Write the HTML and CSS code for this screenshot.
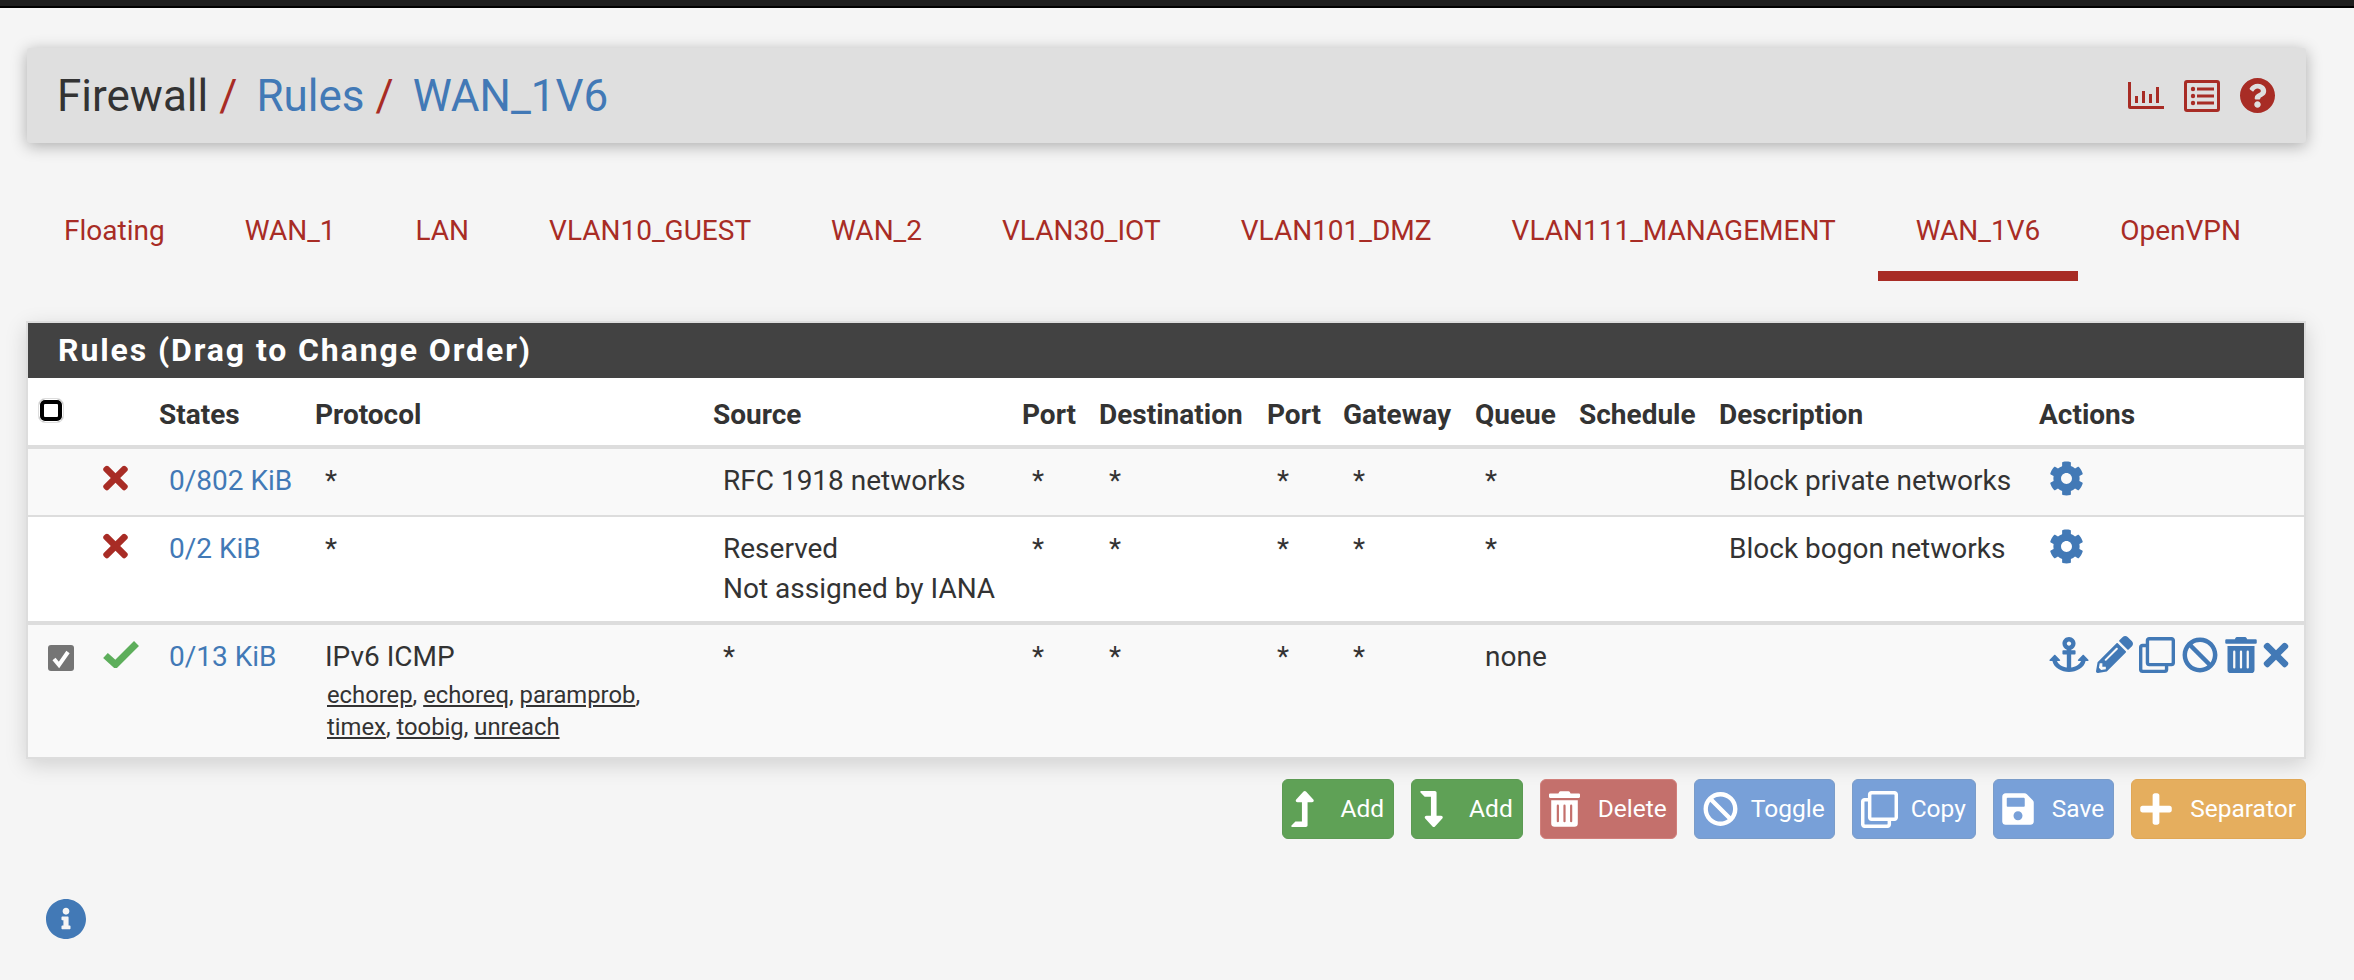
FILE: index.html
```html
<!DOCTYPE html>
<html lang="en">
<head>
<meta charset="utf-8">
<title>Firewall / Rules / WAN_1V6</title>
<link rel="stylesheet" href="styles.css">
</head>
<body>
<svg class="sprite" aria-hidden="true">
  <symbol id="i-times" viewBox="0 0 352 512"><path d="M242.72 256l100.07-100.07c12.28-12.28 12.28-32.19 0-44.48l-22.24-22.24c-12.28-12.28-32.19-12.28-44.48 0L176 189.28 75.93 89.21c-12.28-12.28-32.19-12.28-44.48 0L9.21 111.45c-12.28 12.28-12.28 32.19 0 44.48L109.28 256 9.21 356.07c-12.28 12.28-12.28 32.19 0 44.48l22.24 22.24c12.28 12.28 32.2 12.28 44.48 0L176 322.72l100.07 100.07c12.28 12.28 32.2 12.28 44.48 0l22.24-22.24c12.28-12.28 12.28-32.19 0-44.48L242.72 256z"/></symbol>
  <symbol id="i-cog" viewBox="0 0 512 512"><path d="M487.4 315.7l-42.6-24.6c4.3-23.2 4.3-47 0-70.2l42.6-24.6c4.9-2.8 7.1-8.6 5.5-14-11.1-35.6-30-67.8-54.7-94.6-3.8-4.1-10-5.1-14.8-2.3L380.8 110c-17.9-15.4-38.5-27.3-60.8-35.1V25.8c0-5.6-3.9-10.5-9.4-11.7-36.7-8.2-74.3-7.8-109.2 0-5.5 1.2-9.4 6.1-9.4 11.7V75c-22.2 7.9-42.8 19.8-60.8 35.1L88.7 85.5c-4.9-2.8-11-1.9-14.8 2.3-24.7 26.7-43.6 58.9-54.7 94.6-1.7 5.4.6 11.2 5.5 14L67.3 221c-4.3 23.2-4.3 47 0 70.2l-42.6 24.6c-4.9 2.8-7.1 8.6-5.5 14 11.1 35.6 30 67.8 54.7 94.6 3.8 4.1 10 5.1 14.8 2.3l42.6-24.6c17.9 15.4 38.5 27.3 60.8 35.1v49.2c0 5.6 3.9 10.5 9.4 11.7 36.7 8.2 74.3 7.8 109.2 0 5.5-1.2 9.4-6.1 9.4-11.7v-49.2c22.2-7.9 42.8-19.8 60.8-35.1l42.6 24.6c4.9 2.8 11 1.9 14.8-2.3 24.7-26.7 43.6-58.9 54.7-94.6 1.5-5.5-.7-11.3-5.6-14.1zM256 336c-44.1 0-80-35.9-80-80s35.9-80 80-80 80 35.9 80 80-35.9 80-80 80z"/></symbol>
  <symbol id="i-anchor" viewBox="0 0 576 512"><path d="M12.971 352h32.394C67.172 454.735 181.944 512 288 512c106.229 0 220.853-57.38 242.635-160h32.394c10.691 0 16.045-12.926 8.485-20.485l-67.029-67.029c-4.686-4.686-12.284-4.686-16.971 0l-67.029 67.029c-7.56 7.56-2.206 20.485 8.485 20.485h35.146c-20.29 54.317-84.963 86.588-144.117 94.015V256h52c6.627 0 12-5.373 12-12v-40c0-6.627-5.373-12-12-12h-52v-5.47c37.281-13.178 63.995-48.725 64-90.518C384.005 43.772 341.605.738 289.37.01 235.723-.739 192 42.525 192 96c0 41.798 26.716 77.35 64 90.53V192h-52c-6.627 0-12 5.373-12 12v40c0 6.627 5.373 12 12 12h52v190.015c-58.936-7.399-123.82-39.679-144.117-94.015h35.146c10.691 0 16.045-12.926 8.485-20.485l-67.029-67.029c-4.686-4.686-12.284-4.686-16.971 0L4.485 331.515C-3.074 339.074 2.28 352 12.971 352zM288 64c17.645 0 32 14.355 32 32s-14.355 32-32 32-32-14.355-32-32 14.355-32 32-32z"/></symbol>
  <symbol id="i-pencil" viewBox="0 0 512 512"><path d="M497.9 142.1l-46.1 46.1c-4.7 4.7-12.3 4.7-17 0l-111-111c-4.7-4.7-4.7-12.3 0-17l46.1-46.1c18.7-18.7 49.1-18.7 67.9 0l60.1 60.1c18.8 18.7 18.8 49.1 0 67.9zM284.2 99.8L21.6 362.4.4 483.9c-2.9 16.4 11.4 30.6 27.8 27.8l121.5-21.3 262.6-262.6c4.7-4.7 4.7-12.3 0-17l-111-111c-4.8-4.7-12.4-4.7-17.1 0zM124.1 339.9c-5.5-5.5-5.5-14.3 0-19.8l154-154c5.5-5.5 14.3-5.5 19.8 0s5.5 14.3 0 19.8l-154 154c-5.5 5.5-14.3 5.5-19.8 0zM88 424h48v36.3l-64.5 11.3-31.1-31.1L51.7 376H88v48z"/></symbol>
  <symbol id="i-clone" viewBox="0 0 512 512"><path d="M464 0H144c-26.51 0-48 21.49-48 48v48H48c-26.51 0-48 21.49-48 48v320c0 26.51 21.49 48 48 48h320c26.51 0 48-21.49 48-48v-48h48c26.51 0 48-21.49 48-48V48c0-26.51-21.49-48-48-48zM362 464H54a6 6 0 0 1-6-6V150a6 6 0 0 1 6-6h42v224c0 26.51 21.49 48 48 48h224v42a6 6 0 0 1-6 6zm96-96H150a6 6 0 0 1-6-6V54a6 6 0 0 1 6-6h308a6 6 0 0 1 6 6v308a6 6 0 0 1-6 6z"/></symbol>
  <symbol id="i-ban" viewBox="0 0 512 512"><path d="M256 8C119.034 8 8 119.033 8 256s111.034 248 248 248 248-111.034 248-248S392.967 8 256 8zm130.108 117.892c65.448 65.448 70 165.481 20.677 235.637L150.47 105.216c70.204-49.356 170.226-44.735 235.638 20.676zM125.892 386.108c-65.448-65.448-70-165.481-20.677-235.637L361.53 406.784c-70.203 49.356-170.226 44.736-235.638-20.676z"/></symbol>
  <symbol id="i-trash" viewBox="0 0 448 512"><path d="M32 464a48 48 0 0 0 48 48h288a48 48 0 0 0 48-48V128H32zm272-256a16 16 0 0 1 32 0v224a16 16 0 0 1-32 0zm-96 0a16 16 0 0 1 32 0v224a16 16 0 0 1-32 0zm-96 0a16 16 0 0 1 32 0v224a16 16 0 0 1-32 0zM432 32H312l-9.4-18.7A24 24 0 0 0 281.1 0H166.8a23.72 23.72 0 0 0-21.4 13.3L136 32H16A16 16 0 0 0 0 48v32a16 16 0 0 0 16 16h416a16 16 0 0 0 16-16V48a16 16 0 0 0-16-16z"/></symbol>
  <symbol id="i-up" viewBox="0 0 320 512"><path d="M313.553 119.669L209.587 7.666c-9.485-10.214-25.676-10.229-35.174 0L70.438 119.669C56.232 134.969 67.062 160 88.025 160H152v272H68.024a11.996 11.996 0 0 0-8.485 3.515l-56 56C-4.021 499.074 1.333 512 12.024 512h196c13.255 0 24-10.745 24-24V160h63.966c20.878 0 31.851-24.969 17.563-40.331z"/></symbol>
  <symbol id="i-down" viewBox="0 0 320 512"><path d="M313.553 392.331L209.587 504.334c-9.485 10.214-25.676 10.229-35.174 0L70.438 392.331C56.232 377.031 67.062 352 88.025 352H152V80H68.024a11.996 11.996 0 0 1-8.485-3.515l-56-56C-4.021 12.926 1.333 0 12.024 0h196c13.255 0 24 10.745 24 24v328h63.966c20.878 0 31.851 24.969 17.563 40.331z"/></symbol>
  <symbol id="i-save" viewBox="0 0 448 512"><path d="M433.941 129.941l-83.882-83.882A48 48 0 0 0 316.118 32H48C21.49 32 0 53.49 0 80v352c0 26.51 21.49 48 48 48h352c26.51 0 48-21.49 48-48V163.882a48 48 0 0 0-14.059-33.941zM224 416c-35.346 0-64-28.654-64-64 0-35.346 28.654-64 64-64s64 28.654 64 64c0 35.346-28.654 64-64 64zm96-304.52V212c0 6.627-5.373 12-12 12H76c-6.627 0-12-5.373-12-12V108c0-6.627 5.373-12 12-12h228.52c3.183 0 6.235 1.264 8.485 3.515l3.48 3.48A11.996 11.996 0 0 1 320 111.48z"/></symbol>
  <symbol id="i-plus" viewBox="0 0 448 512"><path d="M416 208H272V64c0-17.67-14.33-32-32-32h-32c-17.67 0-32 14.33-32 32v144H32c-17.67 0-32 14.33-32 32v32c0 17.67 14.33 32 32 32h144v144c0 17.67 14.33 32 32 32h32c17.67 0 32-14.33 32-32V304h144c17.67 0 32-14.33 32-32v-32c0-17.67-14.33-32-32-32z"/></symbol>
</svg>

<div class="topbar"></div>
<main class="page">
  <header class="pagehead">
    <h1 class="crumbs">
      <span class="crumb-root">Firewall</span><span class="slash">/</span>
      <a class="crumb" href="#">Rules</a><span class="slash">/</span>
      <a class="crumb" href="#">WAN_1V6</a>
    </h1>
    <div class="head-icons">
      <svg class="hi hi-chart" viewBox="0 0 36 27"><path d="M0 0h3v24h33v3H2a2 2 0 0 1-2-2zM7 14h3v7H7zM14 9h3v12h-3zM21 12h3v9h-3zM28 5h3v16h-3z"/></svg>
      <svg class="hi hi-list" viewBox="0 0 36 32"><path fill-rule="evenodd" d="M3 0h30a3 3 0 0 1 3 3v26a3 3 0 0 1-3 3H3a3 3 0 0 1-3-3V3a3 3 0 0 1 3-3zm.5 3a.5.5 0 0 0-.5.5v25a.5.5 0 0 0 .5.5h29a.5.5 0 0 0 .5-.5v-25a.5.5 0 0 0-.5-.5z"/><circle cx="9" cy="9" r="2.2"/><circle cx="9" cy="16" r="2.2"/><circle cx="9" cy="23" r="2.2"/><path d="M13 7.5h17v3H13zM13 14.5h17v3H13zM13 21.5h17v3H13z"/></svg>
      <svg class="hi hi-help" viewBox="8 8 496 496"><path d="M504 256c0 136.997-111.043 248-248 248S8 392.997 8 256C8 119.083 119.043 8 256 8s248 111.083 248 248zM262.655 90c-54.497 0-89.255 22.957-116.549 63.758-3.536 5.286-2.353 12.415 2.715 16.258l34.699 26.31c5.205 3.947 12.621 3.008 16.665-2.122 17.864-22.658 30.113-35.797 57.303-35.797 20.429 0 45.698 13.148 45.698 32.958 0 14.976-12.363 22.667-32.534 33.976C247.128 238.528 216 254.941 216 296v4c0 6.627 5.373 12 12 12h56c6.627 0 12-5.373 12-12v-1.333c0-28.462 83.186-29.647 83.186-106.667 0-58.002-60.165-102-116.531-102zM256 338c-25.365 0-46 20.635-46 46 0 25.364 20.635 46 46 46s46-20.636 46-46c0-25.365-20.635-46-46-46z"/></svg>
    </div>
  </header>

  <nav class="tabs">
    <a class="tab" href="#">Floating</a>
    <a class="tab" href="#">WAN_1</a>
    <a class="tab" href="#">LAN</a>
    <a class="tab" href="#">VLAN10_GUEST</a>
    <a class="tab" href="#">WAN_2</a>
    <a class="tab" href="#">VLAN30_IOT</a>
    <a class="tab" href="#">VLAN101_DMZ</a>
    <a class="tab" href="#">VLAN111_MANAGEMENT</a>
    <a class="tab tab-active" href="#">WAN_1V6</a>
    <a class="tab" href="#">OpenVPN</a>
  </nav>

  <section class="panel">
    <h2 class="panel-title">Rules (Drag to Change Order)</h2>
    <table class="rules">
      <thead>
        <tr>
          <th class="c-check"><span class="head-box"></span></th>
          <th class="c-act"></th>
          <th class="c-states">States</th>
          <th class="c-proto">Protocol</th>
          <th class="c-source">Source</th>
          <th class="c-port">Port</th>
          <th class="c-dest">Destination</th>
          <th class="c-port2">Port</th>
          <th class="c-gw">Gateway</th>
          <th class="c-queue">Queue</th>
          <th class="c-sched">Schedule</th>
          <th class="c-desc">Description</th>
          <th class="c-actions">Actions</th>
        </tr>
      </thead>
      <tbody>
        <tr class="row-a">
          <td></td>
          <td><svg class="ic ic-x"><use href="#i-times"/></svg></td>
          <td><a class="link" href="#">0/802 KiB</a></td>
          <td>*</td>
          <td>RFC 1918 networks</td>
          <td>*</td><td>*</td><td>*</td><td>*</td><td>*</td><td></td>
          <td>Block private networks</td>
          <td><svg class="ic ic-cog"><use href="#i-cog"/></svg></td>
        </tr>
        <tr class="row-b">
          <td></td>
          <td><svg class="ic ic-x"><use href="#i-times"/></svg></td>
          <td><a class="link" href="#">0/2 KiB</a></td>
          <td>*</td>
          <td>Reserved<br>Not assigned by IANA</td>
          <td>*</td><td>*</td><td>*</td><td>*</td><td>*</td><td></td>
          <td>Block bogon networks</td>
          <td><svg class="ic ic-cog"><use href="#i-cog"/></svg></td>
        </tr>
        <tr class="row-c">
          <td><span class="row-box"><svg viewBox="0 0 26 26"><path d="M6 14l5 6 9-13"/></svg></span></td>
          <td><svg class="ic-check" viewBox="0 0 36 27"><path d="M2.500 14.500l10 9L33.500 2.500"/></svg></td>
          <td><a class="link" href="#">0/13 KiB</a></td>
          <td>IPv6 ICMP
            <div class="subs"><a href="#">echorep</a>, <a href="#">echoreq</a>, <a href="#">paramprob</a>,<br><a href="#">timex</a>, <a href="#">toobig</a>, <a href="#">unreach</a></div>
          </td>
          <td>*</td>
          <td>*</td><td>*</td><td>*</td><td>*</td><td>none</td><td></td>
          <td></td>
          <td>
            <div class="actions">
              <svg class="ic a-anchor"><use href="#i-anchor"/></svg>
              <svg class="ic a-pencil"><use href="#i-pencil"/></svg>
              <svg class="ic a-clone"><use href="#i-clone"/></svg>
              <svg class="ic a-ban"><use href="#i-ban"/></svg>
              <svg class="ic a-trash"><use href="#i-trash"/></svg>
              <svg class="ic a-times"><use href="#i-times"/></svg>
            </div>
          </td>
        </tr>
      </tbody>
    </table>
  </section>

  <div class="buttons">
    <a class="btn btn-green gap-l" href="#"><svg class="bi bi-arrow"><use href="#i-up"/></svg>Add</a>
    <a class="btn btn-green gap-l" href="#"><svg class="bi bi-arrow"><use href="#i-down"/></svg>Add</a>
    <a class="btn btn-red gap-m" href="#"><svg class="bi bi-trash"><use href="#i-trash"/></svg>Delete</a>
    <a class="btn btn-blue gap-s" href="#"><svg class="bi bi-ban"><use href="#i-ban"/></svg>Toggle</a>
    <a class="btn btn-blue gap-s" href="#"><svg class="bi bi-clone"><use href="#i-clone"/></svg>Copy</a>
    <a class="btn btn-blue gap-m" href="#"><svg class="bi bi-save"><use href="#i-save"/></svg>Save</a>
    <a class="btn btn-orange gap-m" href="#"><svg class="bi bi-plus"><use href="#i-plus"/></svg>Separator</a>
  </div>

  <svg class="info" viewBox="8 8 496 496"><path d="M256 8C119.043 8 8 119.083 8 256c0 136.997 111.043 248 248 248s248-111.003 248-248C504 119.083 392.957 8 256 8zm0 110c23.196 0 42 18.804 42 42s-18.804 42-42 42-42-18.804-42-42 18.804-42 42-42zm56 254c0 6.627-5.373 12-12 12h-88c-6.627 0-12-5.373-12-12v-24c0-6.627 5.373-12 12-12h12v-64h-12c-6.627 0-12-5.373-12-12v-24c0-6.627 5.373-12 12-12h64c6.627 0 12 5.373 12 12v100h12c6.627 0 12 5.373 12 12v24z"/></svg>
</main>
</body>
</html>
```

FILE: styles.css
```css
* { box-sizing: border-box; }
html, body { margin: 0; height: 980px; overflow: hidden; }
body {
  background: #f5f5f5;
  color: #333;
  font-family: Roboto, "Liberation Sans", sans-serif;
  font-size: 28px;
  line-height: 40px;
}
a { color: inherit; text-decoration: none; }
.sprite { position: absolute; width: 0; height: 0; }
.topbar { height: 8px; background: #1f1f1f; border-bottom: 2px solid #000; }

.page { padding: 40px 48px 0 26px; }

.pagehead {
  height: 95px;
  margin-left: 1px;
  background: #dfdfdf;
  border-radius: 3px;
  box-shadow: 0 3px 16px rgba(0, 0, 0, .3);
  display: flex;
  align-items: center;
  justify-content: space-between;
  padding: 0 31px 0 30px;
}
.crumbs { margin: 0; font-size: 44px; font-weight: 400; line-height: 50px; display: flex; white-space: pre; }
.crumb-root { color: #333; }
.crumb { color: #4279b6; }
.slash { color: #a82c25; margin: 0 19px 0 11px; }
.head-icons { display: flex; align-items: center; gap: 20px; }
.hi { display: block; fill: #a82c25; }
.hi-chart { width: 36px; height: 27px; }
.hi-list { width: 36px; height: 32px; }
.hi-help { width: 35px; height: 35px; }

.tabs { display: flex; gap: 4px; margin-top: 68px; }
.tab {
  color: #a82c25;
  padding: 0 38px 20px;
  border-bottom: 10px solid transparent;
  white-space: nowrap;
}
.tab-active { border-bottom-color: #a82c25; }

.panel {
  margin-top: 40px;
  border: 2px solid #ddd;
  box-shadow: 0 6px 20px rgba(0, 0, 0, .15);
  background: #fff;
}
.panel-title {
  margin: 0;
  height: 55px;
  background: #424242;
  color: #fff;
  font-size: 32px;
  font-weight: 700;
  line-height: 55px;
  letter-spacing: 1.900px;
  padding-left: 30px;
}

.rules { width: 100%; border-collapse: separate; border-spacing: 0; table-layout: fixed; }
.rules th {
  text-align: left;
  font-weight: 700;
  padding: 17px 0 0 10px;
  height: 71px;
  vertical-align: top;
  border-bottom: 4px solid #ddd;
  white-space: nowrap;
}
.rules td { padding: 12px 0 0 20px; vertical-align: top; white-space: nowrap; }
.c-check { width: 55px; }
.c-act { width: 66px; }
.c-states { width: 156px; }
.c-proto { width: 398px; }
.c-source { width: 309px; }
.c-port { width: 77px; }
.c-dest { width: 168px; }
.c-port2 { width: 76px; }
.c-gw { width: 132px; }
.c-queue { width: 104px; }
.c-sched { width: 140px; }
.c-desc { width: 320px; }

.row-a td { height: 68px; background: #f9f9f9; border-bottom: 2px solid #ddd; }
.row-b td { height: 108px; background: #fff; border-bottom: 4px solid #ddd; }
.row-c td { height: 132px; background: #f9f9f9; }

.link { color: #4279b6; }
.ic { display: block; fill: #4279b6; }
.ic-x { width: 25px; height: 36px; fill: #a82c25; margin-top: -1px; }
.ic-cog { width: 35px; height: 35px; }
.ic-check { display: block; width: 36px; height: 27px; margin-top: 4px; fill: none; stroke: #5dae5b; stroke-width: 7px; }
.actions { display: flex; align-items: flex-start; }
.a-anchor { width: 40px; height: 35px; margin-right: 7px; }
.a-pencil { width: 37px; height: 37px; margin-top: -1px; margin-right: 6px; }
.a-clone { width: 36px; height: 36px; margin-right: 7px; }
.a-ban { width: 36px; height: 36px; margin-right: 7px; }
.a-trash { width: 32px; height: 36px; margin-right: 6px; }
.a-times { width: 26px; height: 36px; }

.head-box {
  display: block;
  width: 26px; height: 25px;
  margin-top: 3px;
  background: #fff;
  border: 1px solid #ddd;
  border-radius: 7px;
  box-shadow: inset 0 0 0 1px #fff, inset 0 0 0 5px #000;
}
.row-box {
  display: block;
  width: 26px; height: 26px;
  margin-top: 8px;
  border-radius: 3px;
  background: #757575;
}
.row-box svg { display: block; width: 26px; height: 26px; fill: none; stroke: #fff; stroke-width: 4px; }

.subs { font-size: 23.800px; line-height: 32px; margin-top: 2px; padding-left: 2px; }
.subs a { color: #333; text-decoration: underline; }

.buttons { display: flex; justify-content: flex-end; gap: 17px; margin-top: 20px; }
.btn {
  display: flex;
  align-items: center;
  height: 60px;
  padding: 0 9px 0 8px;
  border-radius: 6px;
  color: #fff;
  font-size: 24.500px;
  white-space: nowrap;
  border: 1px solid transparent;
}
.btn-green { background: #5fa156; border-color: #5c9a53; }
.btn-red { background: #c4706c; border-color: #d17f7b; }
.btn-blue { background: #78a0d8; border-color: #7a9cc9; }
.btn-orange { background: #e5ae5e; border-color: #e0a755; }
.gap-l { gap: 26px; }
.gap-m { gap: 18px; }
.gap-s { gap: 13px; }
.bi { display: block; fill: #fff; }
.bi-arrow { width: 23px; height: 36px; }
.bi-trash { width: 31px; height: 36px; }
.bi-ban { width: 35px; height: 36px; }
.bi-clone { width: 37px; height: 37px; }
.bi-save { width: 32px; height: 36px; }
.bi-plus { width: 32px; height: 36px; }

.info { display: block; width: 40px; height: 40px; margin: 60px 0 0 20px; fill: #4279b6; }
```
